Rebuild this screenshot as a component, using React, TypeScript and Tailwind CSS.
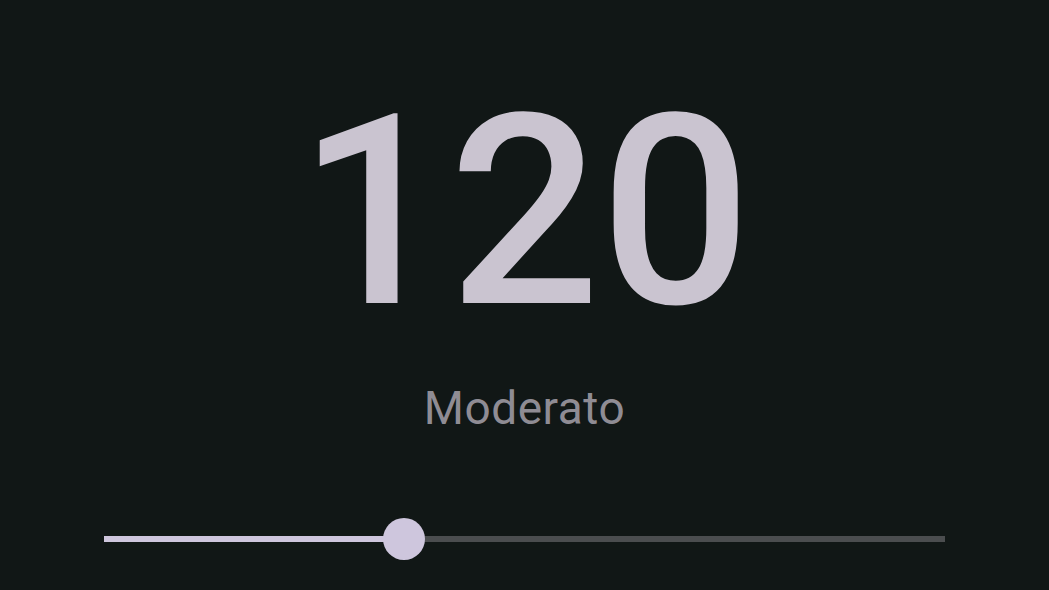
const bpm = 120;
const minBpm = 40;
const maxBpm = 264;

export default function App() {
  const pct = ((bpm - minBpm) / (maxBpm - minBpm)) * 100;

  return (
    <div
      className="h-[590px] w-full bg-[#111716] flex flex-col items-center overflow-hidden"
      style={{ fontFamily: 'Roboto, "Noto Sans", sans-serif' }}
    >
      <div className="mt-[62px] text-[266px] leading-[300px] font-medium text-[#cac4d0]">
        {bpm}
      </div>
      <div className="mt-[20px] text-[46px] leading-[52px] tracking-[0.5px] text-[#8f8c94]">
        Moderato
      </div>
      <div className="mt-[84px] w-[841px] h-[42px] relative flex items-center">
        <div className="h-[6px] bg-[#cec6dd]" style={{ width: `${pct}%` }} />
        <div className="h-[6px] flex-1 bg-[#4b4d4f]" />
        <div
          className="absolute top-0 w-[42px] h-[42px] rounded-full bg-[#cec6dd] -translate-x-1/2"
          style={{ left: `${pct}%` }}
        />
      </div>
    </div>
  );
}
